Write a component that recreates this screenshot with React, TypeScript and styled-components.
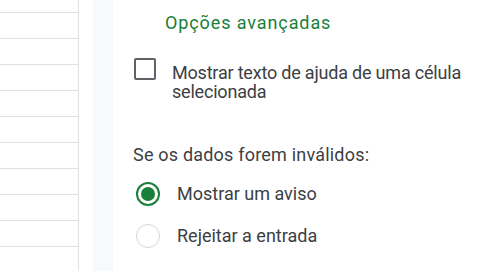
import React from 'react';
import styled, { createGlobalStyle } from 'styled-components';

const GlobalStyle = createGlobalStyle`
  html, body {
    margin: 0;
    padding: 0;
    background: #fff;
  }
  body {
    font-family: Roboto, "Liberation Sans", Arial, sans-serif;
    overflow: hidden;
  }
`;

const Page = styled.div`
  display: flex;
  height: 271px;
  overflow: hidden;
`;

const Grid = styled.div`
  width: 78px;
  flex-shrink: 0;
  border-right: 1px solid #e1e1e1;
  display: flex;
  flex-direction: column;
`;

const Row = styled.div<{ $partial?: boolean }>`
  height: ${(p) => (p.$partial ? '12px' : '25px')};
  flex-shrink: 0;
  border-bottom: 1px solid #e1e1e1;
`;

const Gutter = styled.div`
  width: 14px;
  flex-shrink: 0;
`;

const Strip = styled.div`
  width: 20px;
  flex-shrink: 0;
  background: #f8f9fa;
`;

const Panel = styled.div`
  flex: 1;
  padding: 13px 0 0 20px;
  color: #3c4043;
  font-size: 18px;
`;

const Title = styled.div`
  color: #188038;
  line-height: 20px;
  margin-left: 32px;
  letter-spacing: 0.9px;
`;

const Option = styled.label`
  display: flex;
  align-items: flex-start;
  gap: 16px;
  margin-top: 30px;
  line-height: 19px;
  letter-spacing: -0.2px;
  cursor: pointer;
`;

const Box = styled.span`
  width: 18px;
  height: 18px;
  border: 2.5px solid #5f6368;
  border-radius: 2px;
  flex-shrink: 0;
  margin: -5px 0 0 1px;
`;

const Heading = styled.div`
  margin-top: 44px;
  line-height: 20px;
  letter-spacing: 0.2px;
`;

const RadioOption = styled.label<{ $top: number }>`
  display: flex;
  align-items: center;
  gap: 17px;
  margin-top: ${(p) => p.$top}px;
  line-height: 20px;
  cursor: pointer;
`;

const Radio = styled.span<{ $checked?: boolean }>`
  width: 24px;
  height: 24px;
  box-sizing: border-box;
  border-radius: 50%;
  border: ${(p) => (p.$checked ? '2.5px solid #188038' : '1.5px solid #d6d6d6')};
  flex-shrink: 0;
  margin-left: 3px;
  display: flex;
  align-items: center;
  justify-content: center;

  &::after {
    content: '';
    display: ${(p) => (p.$checked ? 'block' : 'none')};
    width: 14px;
    height: 14px;
    border-radius: 50%;
    background: #188038;
  }
`;

export default function App() {
  return (
    <>
      <GlobalStyle />
      <Page>
        <Grid>
          <Row $partial />
          {Array.from({ length: 10 }).map((_, i) => (
            <Row key={i} />
          ))}
        </Grid>
        <Gutter />
        <Strip />
        <Panel>
          <Title>Opções avançadas</Title>
          <Option>
            <Box />
            <span>
              Mostrar texto de ajuda de uma célula
              <br />
              selecionada
            </span>
          </Option>
          <Heading>Se os dados forem inválidos:</Heading>
          <RadioOption $top={17}>
            <Radio $checked />
            <span>Mostrar um aviso</span>
          </RadioOption>
          <RadioOption $top={18}>
            <Radio />
            <span>Rejeitar a entrada</span>
          </RadioOption>
        </Panel>
      </Page>
    </>
  );
}
